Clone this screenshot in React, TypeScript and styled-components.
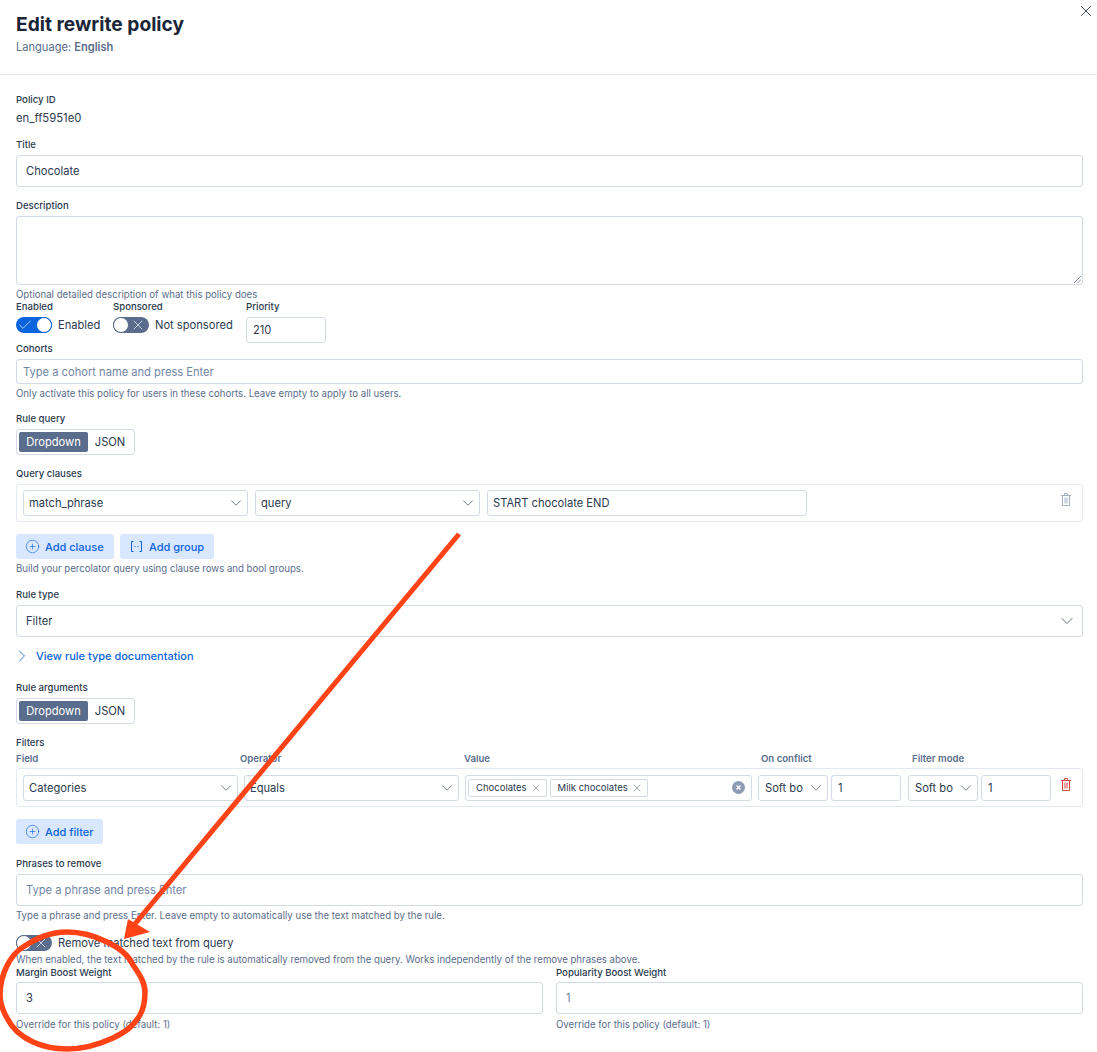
import styled, { createGlobalStyle } from "styled-components";
import { Check, ChevronDown, ChevronRight, CirclePlus, X } from "lucide-react";

const Global = createGlobalStyle`
  html, body { margin: 0; padding: 0; background: #fff; }
  body { font-family: Inter, "Liberation Sans", sans-serif; color: #111c2c; -webkit-font-smoothing: antialiased; }
  * { box-sizing: border-box; }
`;

const Page = styled.div`
  position: relative;
  width: 1097px;
  height: 1052px;
  overflow: hidden;
`;
const Header = styled.header`
  height: 75px;
  padding: 12px 16px 0;
  border-bottom: 1px solid #e3e8f2;
`;
const Heading = styled.h1`
  margin: 0;
  font-size: 19.2px;
  line-height: 24px;
  font-weight: 700;
  color: #1a2638;
`;
const Language = styled.div`
  margin-top: 4px;
  font-size: 11.1px;
  line-height: 14px;
  color: #5a6d8c;
  b { font-weight: 600; }
`;
const CloseButton = styled.button`
  position: absolute;
  top: 2px;
  right: 2px;
  width: 18px;
  height: 18px;
  padding: 0;
  border: 0;
  background: none;
  color: #1d2a3e;
  display: flex;
  align-items: center;
  justify-content: center;
`;
const Body = styled.main`
  padding: 0 14px 0 16px;
  display: flex;
  flex-direction: column;
`;
const Label = styled.div<{ $top: number; $bottom?: number }>`
  margin-top: ${(p) => p.$top}px;
  font-size: 9.6px;
  line-height: 12px;
  font-weight: 500;
  color: #2b3a50;
  margin-bottom: ${(p) => p.$bottom ?? 4}px;
`;
const Help = styled.div<{ $top?: number }>`
  margin-top: ${(p) => p.$top ?? 4}px;
  font-size: 9.63px;
  line-height: 12px;
  color: #5a6d8c;
`;
const Plain = styled.div`
  font-size: 11.3px;
  line-height: 14px;
  color: #2b3a50;
  margin-top: 1px;
`;
const TextBox = styled.div<{ $h: number; $pad?: number; $muted?: boolean; $w?: number }>`
  height: ${(p) => p.$h}px;
  width: ${(p) => (p.$w ? `${p.$w}px` : "100%")};
  padding: 0 ${(p) => p.$pad ?? 9}px;
  border: 1px solid #d3dae6;
  border-radius: 3px;
  background: #fff;
  display: flex;
  align-items: center;
  font-size: 11.15px;
  color: ${(p) => (p.$muted ? "#7186a5" : "#2b3a50")};
  white-space: nowrap;
  overflow: hidden;
`;
const TextArea = styled.div`
  position: relative;
  height: 69px;
  border: 1px solid #d3dae6;
  border-radius: 3px;
`;
const Grip = styled.svg`
  position: absolute;
  right: 1px;
  bottom: 1px;
`;
const SwitchRow = styled.div`
  display: flex;
  align-items: flex-start;
  height: 42px;
`;
const SwitchCol = styled.div<{ $w: number }>`
  width: ${(p) => p.$w}px;
  display: flex;
  flex-direction: column;
`;
const SmallLabel = styled.div`
  font-size: 9.6px;
  line-height: 12px;
  font-weight: 500;
  color: #2b3a50;
  margin-bottom: 4px;
`;
const SwitchLine = styled.div<{ $top?: number }>`
  display: flex;
  align-items: center;
  gap: 6px;
  margin-top: ${(p) => p.$top ?? 0}px;
  font-size: 11.15px;
  color: #2b3a50;
  white-space: nowrap;
`;
const Track = styled.span<{ $on?: boolean }>`
  position: relative;
  flex: none;
  width: 36px;
  height: 16px;
  border-radius: 8px;
  background: ${(p) => (p.$on ? "#0b64dd" : "#5a6d8c")};
  color: #fff;
  display: flex;
  align-items: center;
  justify-content: ${(p) => (p.$on ? "flex-start" : "flex-end")};
  padding: ${(p) => (p.$on ? "0 0 0 1px" : "0 3px 0 0")};
`;
const Knob = styled.span<{ $on?: boolean }>`
  position: absolute;
  top: 0;
  ${(p) => (p.$on ? "right: 0;" : "left: 0;")}
  width: 16px;
  height: 16px;
  border-radius: 50%;
  background: #fff;
  border: 1px solid ${(p) => (p.$on ? "#0b64dd" : "#5a6d8c")};
`;
const ButtonGroup = styled.div`
  display: inline-flex;
  align-self: flex-start;
  align-items: center;
  height: 26px;
  width: 119px;
  padding: 2px;
  border: 1px solid #d3dae6;
  border-radius: 3px;
  font-size: 11.15px;
`;
const GroupOn = styled.span`
  width: 69px;
  height: 20px;
  border-radius: 2px;
  background: #5a6d8c;
  color: #fff;
  display: flex;
  align-items: center;
  justify-content: center;
`;
const GroupOff = styled.span`
  flex: 1;
  text-align: center;
  color: #2b3a50;
`;
const ClausePanel = styled.div<{ $h: number; $gap: number }>`
  position: relative;
  height: ${(p) => p.$h}px;
  padding: 0 6px;
  border: 1px solid #e3e8f2;
  border-radius: 3px;
  display: flex;
  align-items: center;
  gap: ${(p) => p.$gap}px;
`;
const Select = styled.div<{ $w: number; $h?: number; $clip?: boolean; $pad?: number; $right?: number }>`
  flex: none;
  width: ${(p) => p.$w}px;
  height: ${(p) => p.$h ?? 26}px;
  padding: 0 ${(p) => p.$right ?? 2}px 0 ${(p) => p.$pad ?? (p.$clip ? 6 : 5)}px;
  border: 1px solid #d3dae6;
  border-radius: 3px;
  display: flex;
  align-items: center;
  justify-content: space-between;
  font-size: 11.15px;
  color: #2b3a50;
  white-space: nowrap;
  span {
    overflow: hidden;
    ${(p) => p.$clip && "width: 39px;"}
  }
  svg { flex: none; color: #48566b; }
`;
const TrashButton = styled.svg<{ $danger?: boolean; $top: number }>`
  position: absolute;
  right: 11px;
  top: ${(p) => p.$top}px;
  color: ${(p) => (p.$danger ? "#d8473c" : "#a4b0c3")};
`;
const Buttons = styled.div`
  display: flex;
  gap: 6px;
  margin-top: 12px;
`;
const SoftButton = styled.div<{ $w: number }>`
  width: ${(p) => p.$w}px;
  height: 25px;
  padding-left: 9px;
  border-radius: 3px;
  background: #d9e8ff;
  color: #0b64dd;
  display: flex;
  align-items: center;
  gap: 5px;
  font-size: 11px;
  font-weight: 500;
`;
const DocLink = styled.div`
  margin-top: 12px;
  height: 14px;
  display: flex;
  align-items: center;
  gap: 4px;
  margin-left: -4px;
  font-size: 11px;
  font-weight: 500;
  color: #0b64dd;
`;
const FilterHeads = styled.div`
  display: grid;
  grid-template-columns: 224px 224px 297px 151px 1fr;
  margin-bottom: 3px;
`;
const FilterHead = styled.div`
  font-size: 9.6px;
  line-height: 12px;
  font-weight: 600;
  color: #5a6d8c;
`;
const TagBox = styled.div`
  flex: none;
  width: 287px;
  height: 26px;
  padding: 0 6px 0 2px;
  border: 1px solid #d3dae6;
  border-radius: 3px;
  display: flex;
  align-items: center;
  gap: 3px;
`;
const Tag = styled.span`
  height: 18px;
  padding: 0 4px 0 7px;
  border: 1px solid #d3dae6;
  border-radius: 2px;
  display: flex;
  align-items: center;
  gap: 3px;
  font-size: 9.5px;
  color: #2b3a50;
  white-space: nowrap;
  svg { color: #48566b; }
`;
const ClearIcon = styled.svg`
  margin-left: auto;
`;
const Pair = styled.div<{ $left?: number }>`
  display: flex;
  gap: 3px;
  margin-left: ${(p) => p.$left ?? 0}px;
`;
const BoostRow = styled.div`
  display: grid;
  grid-template-columns: 1fr 1fr;
  gap: 13px;
`;
const Placeholder = styled.span`
  color: #7186a5;
`;
const Overlay = styled.svg`
  position: absolute;
  left: 0;
  top: 0;
  pointer-events: none;
`;

function Toggle({ on }: { on?: boolean }) {
  return (
    <Track $on={on}>
      {on ? <Check size={16} strokeWidth={1} /> : <X size={16} strokeWidth={1} />}
      <Knob $on={on} />
    </Track>
  );
}

function Mode() {
  return (
    <ButtonGroup>
      <GroupOn>Dropdown</GroupOn>
      <GroupOff>JSON</GroupOff>
    </ButtonGroup>
  );
}

function DropDown({ w, text, clip }: { w: number; text: string; clip?: boolean }) {
  return (
    <Select $w={w} $clip={clip}>
      <span>{text}</span>
      <ChevronDown size={18} strokeWidth={1} />
    </Select>
  );
}

function GroupIcon() {
  return (
    <svg width="15" height="15" viewBox="0 0 15 15" fill="none" stroke="currentColor" strokeWidth="1">
      <path d="M4.5 2.5h-2v10h2M10.5 2.5h2v10h-2" />
      <path d="M5.5 7.5h1M8.5 7.5h1" />
    </svg>
  );
}

function TrashIcon({ danger, top }: { danger?: boolean; top: number }) {
  return (
    <TrashButton $danger={danger} $top={top} width="10" height="13" viewBox="0 0 10 13" fill="none" stroke="currentColor">
      <path d="M0 2.5h10M3.5 2V.5h3V2" />
      <path d="M1.5 3v9.5h7V3" />
      <path d="M4 4.5v6M6 4.5v6" />
    </TrashButton>
  );
}

export default function App() {
  return (
    <Page>
      <Global />
      <Header>
        <Heading>Edit rewrite policy</Heading>
        <Language>
          Language: <b>English</b>
        </Language>
      </Header>
      <CloseButton>
        <X size={18} strokeWidth={1.1} />
      </CloseButton>
      <Body>
        <Label $top={19}>Policy ID</Label>
        <Plain>en_ff5951e0</Plain>
        <Label $top={14}>Title</Label>
        <TextBox $h={32}>Chocolate</TextBox>
        <Label $top={13}>Description</Label>
        <TextArea>
          <Grip width="7" height="7" viewBox="0 0 7 7" stroke="#69778c" strokeWidth="0.8">
            <path d="M0 7L7 0M3.5 7L7 3.5" />
          </Grip>
        </TextArea>
        <Help>Optional detailed description of what this policy does</Help>
        <SwitchRow>
          <SwitchCol $w={97}>
            <SmallLabel>Enabled</SmallLabel>
            <SwitchLine>
              <Toggle on />
              Enabled
            </SwitchLine>
          </SwitchCol>
          <SwitchCol $w={133}>
            <SmallLabel>Sponsored</SmallLabel>
            <SwitchLine>
              <Toggle />
              Not sponsored
            </SwitchLine>
          </SwitchCol>
          <SwitchCol $w={80}>
            <SmallLabel>Priority</SmallLabel>
            <TextBox $h={26} $w={80} $pad={6}>210</TextBox>
          </SwitchCol>
        </SwitchRow>
        <Label $top={0}>Cohorts</Label>
        <TextBox $h={25} $pad={6} $muted>Type a cohort name and press Enter</TextBox>
        <Help>Only activate this policy for users in these cohorts. Leave empty to apply to all users.</Help>
        <Label $top={13}>Rule query</Label>
        <Mode />
        <Label $top={13}>Query clauses</Label>
        <ClausePanel $h={38} $gap={7}>
          <DropDown w={225} text="match_phrase" />
          <DropDown w={225} text="query" />
          <TextBox $h={26} $w={320} $pad={5}>START chocolate END</TextBox>
          <TrashIcon top={8} />
        </ClausePanel>
        <Buttons>
          <SoftButton $w={98}>
            <CirclePlus size={15} strokeWidth={1} />
            Add clause
          </SoftButton>
          <SoftButton $w={94}>
            <GroupIcon />
            Add group
          </SoftButton>
        </Buttons>
        <Help>Build your percolator query using clause rows and bool groups.</Help>
        <Label $top={14}>Rule type</Label>
        <Select $w={1067} $h={32} $pad={9} $right={5}>
          <span>Filter</span>
          <ChevronDown size={20} strokeWidth={1} />
        </Select>
        <DocLink>
          <ChevronRight size={20} strokeWidth={1} />
          View rule type documentation
        </DocLink>
        <Label $top={19}>Rule arguments</Label>
        <Mode />
        <Label $top={13}>Filters</Label>
        <FilterHeads>
          <FilterHead>Field</FilterHead>
          <FilterHead>Operator</FilterHead>
          <FilterHead>Value</FilterHead>
          <FilterHead>On conflict</FilterHead>
          <FilterHead>Filter mode</FilterHead>
        </FilterHeads>
        <ClausePanel $h={39} $gap={6}>
          <DropDown w={215} text="Categories" />
          <DropDown w={215} text="Equals" />
          <TagBox>
            <Tag>
              Chocolates
              <X size={12} strokeWidth={1} />
            </Tag>
            <Tag>
              Milk chocolates
              <X size={12} strokeWidth={1} />
            </Tag>
            <ClearIcon width="13" height="13" viewBox="0 0 13 13">
              <circle cx="6.5" cy="6.5" r="6.5" fill="#8d9bb3" />
              <path d="M4.5 4.5l4 4M8.5 4.5l-4 4" stroke="#fff" strokeWidth="1.3" />
            </ClearIcon>
          </TagBox>
          <Pair>
            <DropDown w={70} text="Soft bo" clip />
            <TextBox $h={26} $w={70} $pad={6}>1</TextBox>
          </Pair>
          <Pair $left={1}>
            <DropDown w={70} text="Soft bo" clip />
            <TextBox $h={26} $w={70} $pad={6}>1</TextBox>
          </Pair>
          <TrashIcon danger top={9} />
        </ClausePanel>
        <Buttons>
          <SoftButton $w={87}>
            <CirclePlus size={15} strokeWidth={1} />
            Add filter
          </SoftButton>
        </Buttons>
        <Label $top={14}>Phrases to remove</Label>
        <TextBox $h={32}>
          <Placeholder>Type a phrase and press Enter</Placeholder>
        </TextBox>
        <Help>Type a phrase and press Enter. Leave empty to automatically use the text matched by the rule.</Help>
        <SwitchLine $top={13}>
          <Toggle />
          Remove matched text from query
        </SwitchLine>
        <Help $top={3}>When enabled, the text matched by the rule is automatically removed from the query. Works independently of the remove phrases above.</Help>
        <BoostRow>
          <div>
            <Label $top={1} $bottom={3}>Margin Boost Weight</Label>
            <TextBox $h={32}>3</TextBox>
            <Help $top={5}>Override for this policy (default: 1)</Help>
          </div>
          <div>
            <Label $top={1} $bottom={3}>Popularity Boost Weight</Label>
            <TextBox $h={32} $muted>1</TextBox>
            <Help $top={5}>Override for this policy (default: 1)</Help>
          </div>
        </BoostRow>
      </Body>
      <Overlay width="1097" height="1052" viewBox="0 0 1097 1052" fill="none">
        <path d="M459 534L129 931" stroke="#ff4316" strokeWidth="5" />
        <path d="M124 939L128 919L150 932Z" fill="#ff4316" />
        <path
          d="M0 995C0 975 10 955 23 947C37 938 50 932 67 932C83 932 95 936 107 942C120 948 129 956 133 965C140 975 145 983 145 992C145 1000 144 1008 140 1015C133 1027 125 1032 113 1038C98 1045 82 1049 67 1049C55 1049 44 1047 33 1042C20 1036 12 1028 7 1018C3 1011 0 1003 0 995Z"
          stroke="#ff4316"
          strokeWidth="5.5"
        />
      </Overlay>
    </Page>
  );
}
